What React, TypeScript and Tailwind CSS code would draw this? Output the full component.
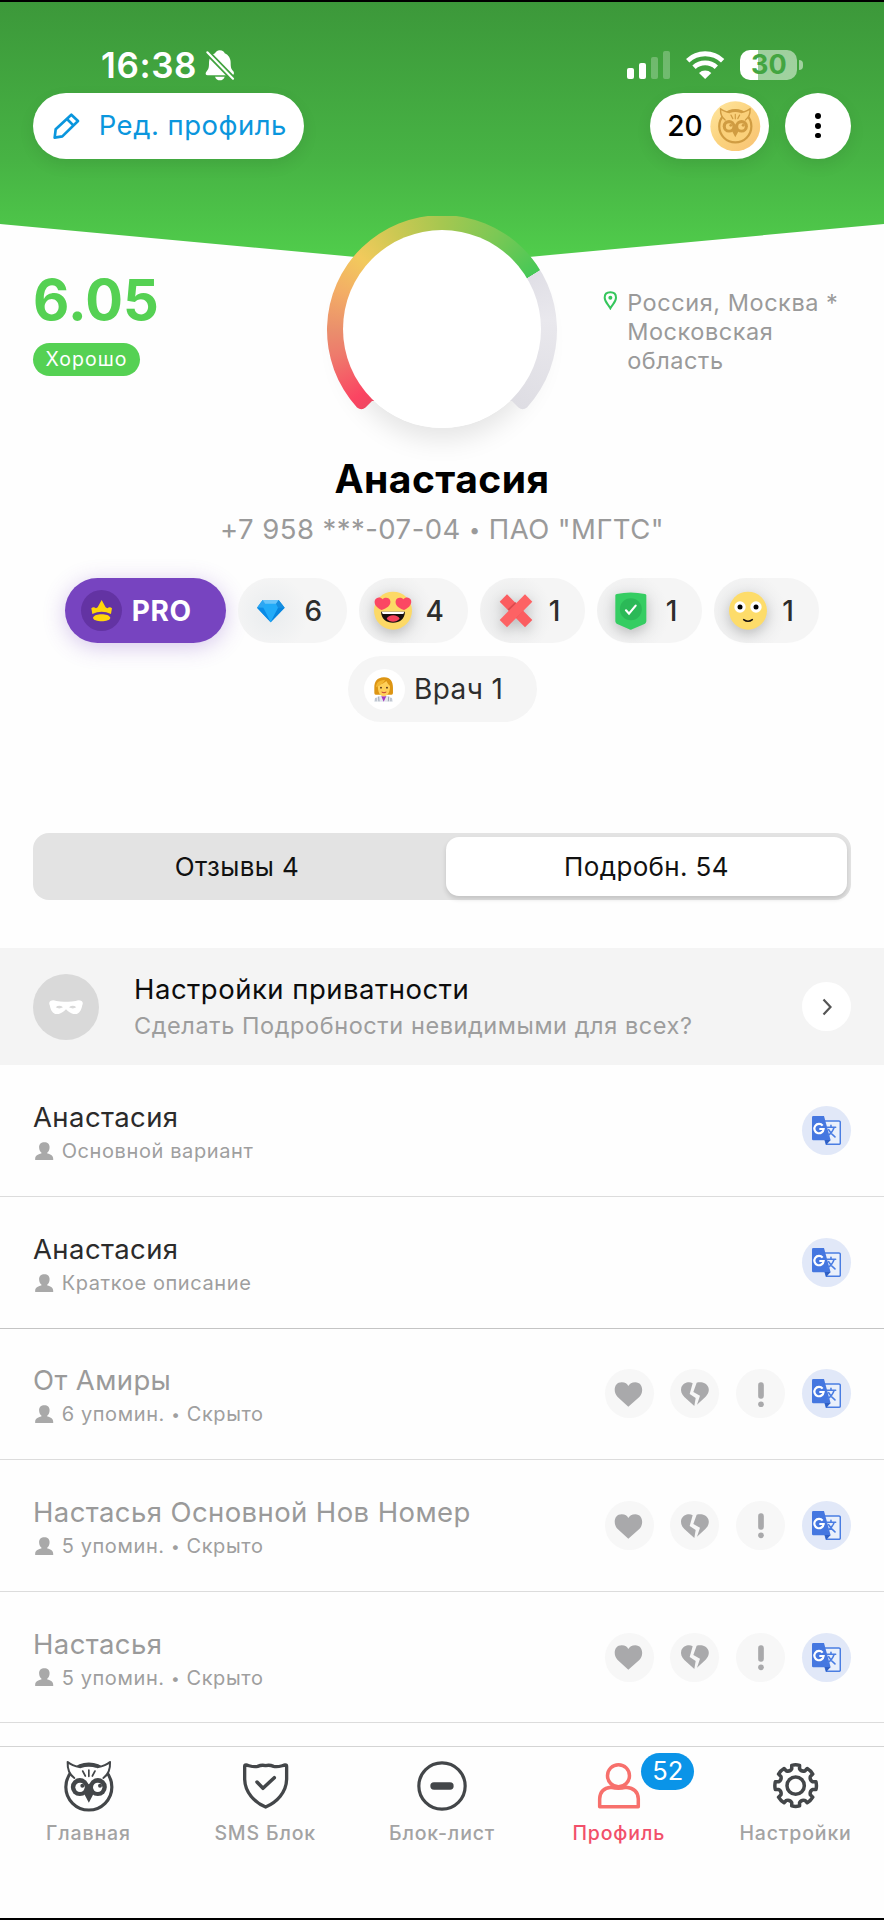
import React from 'react';

const range = (n: number) => Array.from({ length: n }, (_, i) => i);

function OwlShape({ ink, paper }: { ink: string; paper: string }) {
  return (
    <g strokeLinejoin="round" strokeLinecap="round">
      <circle cx="265.500" cy="174" r="69" fill={paper} stroke={ink} strokeWidth="9.500" />
      <path
        d="M202 99C212 108 225 112 238 115Q265 108 293 115C306 112 319 108 329 99C330 118 325 136 309 147Q282 149 265.500 165Q249 149 222 147C206 136 201 118 202 99Z"
        fill={paper}
      />
      <path d="M240 107Q265 97 291 107L289 117Q265 109 242 117Z" fill={ink} />
      <path
        d="M240 115C225 112 212 108 202 99C201 118 206 136 222 147M291 115C306 112 319 108 329 99C330 118 325 136 309 147"
        fill="none"
        stroke={ink}
        strokeWidth="6"
      />
      <path d="M247 126L255 141M265.500 123V142M284 126L276 141" stroke={ink} strokeWidth="5" />
      <circle cx="238.500" cy="174" r="27" fill={ink} />
      <circle cx="292.500" cy="174" r="27" fill={ink} />
      <path d="M240 158L265.500 166L291 158L282 190L265.500 221L249 190Z" fill={ink} />
      <circle cx="239" cy="175" r="14" fill={paper} />
      <circle cx="292" cy="175" r="14" fill={paper} />
      <circle cx="246" cy="170" r="6" fill={ink} />
      <circle cx="299" cy="170" r="6" fill={ink} />
    </g>
  );
}

function BellOff() {
  return (
    <svg viewBox="610 148 96 96" className="size-[32px]">
      <mask id="bell-cut">
        <rect x="600" y="140" width="120" height="120" fill="white" />
        <path d="M612 150L704 244" stroke="black" strokeWidth="17" />
      </mask>
      <g fill="white" mask="url(#bell-cut)">
        <path d="M657 152C666 152 671 157 672 161C684 166 690 177 690 190C690 205 692 208 698 215C702 222 699 227 694 227H621C615 227 613 221 617 216C624 208 625 203 625 190C625 176 631 166 643 161C645 157 650 152 657 152Z" />
      </g>
      <path d="M643 231H672C669 239 664 242 657.500 242C651 242 646 239 643 231Z" fill="white" />
      <path d="M620 158L697 237" stroke="white" strokeWidth="6.500" strokeLinecap="round" />
    </svg>
  );
}

function Wifi() {
  return (
    <svg viewBox="730 146 120 94" className="h-[31.300px] w-[40px]" fill="none" stroke="white" strokeWidth="14.500">
      <path d="M738 181A77 77 0 0 1 843 181" />
      <path d="M757 201A49 49 0 0 1 824 201" />
      <path d="M772 218A27 27 0 0 1 809 218L790.500 236Z" fill="white" stroke="none" />
    </svg>
  );
}

function Pencil() {
  return (
    <svg viewBox="156 332 86 86" className="size-[28.700px]" fill="none" stroke="#0a96dd" strokeWidth="8" strokeLinejoin="round">
      <path d="M164 409L167 384L214 340L234 359L187 405Z" />
      <path d="M201 353L220 372" />
    </svg>
  );
}

function Crown() {
  return (
    <svg viewBox="152 118 70 70" className="size-[23.300px]" fill="#ffd60a">
      <path d="M156 146C160 142 165 142 170 146L175 143L187 121L199 143L204 146C209 142 214 142 218 146L215 163Q187 150 159 163Z" />
      <path d="M161 174C165 160 209 160 213 174C213 188 161 188 161 174Z" />
    </svg>
  );
}

function Diamond() {
  return (
    <svg viewBox="648 114 90 78" className="h-[26px] w-[30px]">
      <path d="M668 120H716L734 143L692 187L651 143Z" fill="#129bf0" />
      <path d="M668 120L651 143H674L680 132Z" fill="#2ea6f2" />
      <path d="M668 120H716L709 132H676Z" fill="#69c4fa" />
      <path d="M676 131H709L716 143L692 187L668 143Z" fill="#22abf8" />
      <path d="M716 120L734 143H714L708 131Z" fill="#178edf" />
      <path d="M651 143H670L692 187Z" fill="#0a8be6" />
      <path d="M734 143H714L692 187Z" fill="#0785de" />
    </svg>
  );
}

function LoveFace() {
  return (
    <svg viewBox="1000 94 120 120" className="size-[40px] drop-shadow-[0_4px_6px_rgba(0,0,0,0.18)]">
      <circle cx="1060" cy="153" r="57" fill="#fcd966" />
      <path d="M1024 156H1096C1095 178 1080 189 1060 189C1040 189 1025 178 1024 156Z" fill="#17100f" />
      <path d="M1026 156H1094L1091 163H1029Z" fill="white" />
      <path d="M1041 177C1045 163 1076 163 1080 177C1070 189 1050 189 1041 177Z" fill="#f5405b" />
      <path d="M1026 151C1008 143 1002 131 1006 121C1010 112 1023 111 1029 119C1036 111 1050 114 1052 124C1054 136 1044 145 1026 151Z" fill="#fb4763" />
      <path d="M1093 151C1075 145 1066 136 1068 124C1070 114 1084 111 1091 119C1097 111 1110 112 1114 121C1117 132 1111 143 1093 151Z" fill="#fb4763" />
    </svg>
  );
}

function Cross() {
  return (
    <svg viewBox="170 98 114 114" className="size-[38px] drop-shadow-[0_4px_6px_rgba(0,0,0,0.18)]">
      <path d="M178 127L200 105L276 182L254 204Z" fill="#fb5d60" />
      <path d="M202 150L225 128L250 152L228 176Z" fill="#cf4448" opacity="0.750" />
      <path d="M178 182L254 105L276 127L200 204Z" fill="#fd6264" />
    </svg>
  );
}

function GreenShield() {
  return (
    <svg viewBox="518 92 114 120" className="h-[40px] w-[38px] drop-shadow-[0_4px_6px_rgba(0,0,0,0.18)]">
      <path d="M528 105Q528 102 532 101Q574 92 617 101Q621 102 621 105V183Q621 187 617 190L580 206Q574 210 568 206L532 190Q528 187 528 183Z" fill="#35cd62" />
      <circle cx="574.500" cy="147" r="33" fill="#2bb957" />
      <path d="M560 150L569 160L589 136" fill="none" stroke="white" strokeWidth="6.500" strokeLinecap="round" />
    </svg>
  );
}

function SmileFace() {
  return (
    <svg viewBox="864 94 120 120" className="size-[40px] drop-shadow-[0_4px_6px_rgba(0,0,0,0.18)]">
      <circle cx="924" cy="153" r="57" fill="#fddc6a" />
      <circle cx="900" cy="142" r="17" fill="white" />
      <circle cx="948" cy="142" r="17" fill="white" />
      <circle cx="900" cy="142" r="7.500" fill="black" />
      <circle cx="948" cy="142" r="7.500" fill="black" />
      <path d="M911 180Q924 190 937 180" fill="none" stroke="#17100f" strokeWidth="4.500" strokeLinecap="round" />
    </svg>
  );
}

function Doctor() {
  return (
    <svg viewBox="1000 350 70 80" className="h-[26.700px] w-[23.300px]">
      <path d="M1035 354C1055 353 1063 367 1063 385V401Q1063 408 1056 406H1014Q1007 408 1007 401V385C1007 367 1015 355 1035 354Z" fill="#dd9513" />
      <path d="M1006 427C1006 415 1014 411 1026 409H1044C1056 411 1063 415 1063 427Z" fill="#e4e8ee" />
      <path d="M1028 411H1043L1035 427Z" fill="#a43bc0" />
      <path d="M1012 426V416M1021 426L1020 412M1050 412L1049 426M1057 416V426" stroke="#8d96a8" strokeWidth="2.500" />
      <path d="M1018 377Q1035 374 1043 365Q1048 375 1054 380C1055 399 1046 411 1035 411C1025 411 1016 399 1018 377Z" fill="#ffd05a" />
      <path d="M1012 384C1012 369 1022 362 1040 361Q1034 374 1012 384Z" fill="#f2b632" />
      <circle cx="1027" cy="385" r="2.800" fill="#51301a" />
      <circle cx="1045" cy="385" r="2.800" fill="#51301a" />
      <path d="M1029 398Q1036 403 1043 398" stroke="#c23b35" strokeWidth="3" fill="none" />
    </svg>
  );
}

function Person() {
  return (
    <svg viewBox="105 184 56 57" className="size-[18.700px]" fill="#a9a9a9">
      <path d="M133 185C143 185 149 191 149 200C149 208 146 213 142 216V219C153 221 160 226 160 235V239H105V235C105 226 113 221 124 219V216C120 213 117 208 117 200C117 191 123 185 133 185Z" />
    </svg>
  );
}

function Translate() {
  return (
    <svg viewBox="0 0 88 88" className="size-[29.300px]" strokeLinecap="round" strokeLinejoin="round">
      <path d="M40 15H81Q85 15 85 19V81Q85 85 81 85H43L40 73" fill="#eaf0fb" stroke="#4a7de2" strokeWidth="4.500" />
      <path d="M4 0H36L56 73H4Q0 73 0 69V4Q0 0 4 0Z" fill="#4577e0" />
      <path d="M38 72H56L43 86Z" fill="#2f5fc4" />
      <path d="M44 34H71M57 28V34M66 35Q61 50 47 59M50 41Q55 51 69 63" fill="none" stroke="#4a7de2" strokeWidth="4.800" />
      <path d="M32 29A14 14 0 1 0 35 39H22" fill="none" stroke="white" strokeWidth="6.500" strokeLinecap="butt" strokeLinejoin="miter" />
    </svg>
  );
}

function Heart() {
  return (
    <svg viewBox="104 902 88 78" className="h-[26px] w-[29.300px]" fill="#a9a9ab">
      <path d="M147 979L115 950C100 935 104 906 127 906C138 906 144 911 147 917C151 911 157 906 168 906C190 906 195 935 180 950Z" />
    </svg>
  );
}

function BrokenHeart() {
  return (
    <svg viewBox="300 902 90 78" className="h-[26px] w-[30px]" fill="#a9a9ab">
      <path d="M338 909C327 902 309 908 304 921C301 932 305 942 313 950L343 977L347 953L329 941Z" />
      <path d="M350 907C364 903 381 908 385 921C389 933 384 942 376 950L351 973L360 946L340 935Z" />
    </svg>
  );
}

function Exclaim() {
  return (
    <svg viewBox="530 902 24 80" className="h-[26.700px] w-[8px]" fill="#a9a9ab">
      <rect x="533.500" y="906" width="17" height="49" rx="8" />
      <circle cx="542" cy="972" r="8.500" />
    </svg>
  );
}

function NavShield() {
  return (
    <svg viewBox="720 93 148 148" className="size-[49.300px]" fill="none" stroke="#434649" strokeWidth="10" strokeLinejoin="round" strokeLinecap="round">
      <path d="M735 105C746 107 758 113 770 109C780 105 787 105 794 107C801 105 808 105 818 109C830 113 842 107 853 105Q857 105 857 110V148C856 187 828 217 794 231C760 217 732 187 731 148V110Q731 105 735 105Z" />
      <path d="M768 156L786 175L820 143" strokeWidth="10.500" />
    </svg>
  );
}

function NavBlock() {
  return (
    <svg viewBox="-75 -75 150 150" className="size-[50px]" fill="none" stroke="#434649">
      <circle r="69.500" strokeWidth="9.500" />
      <path d="M-24 0H24" strokeWidth="22" strokeLinecap="round" />
    </svg>
  );
}

function NavProfile() {
  return (
    <svg viewBox="456 184 148 148" className="size-[49.300px]" fill="none" stroke="#f7706c" strokeWidth="10.500" strokeLinejoin="round">
      <circle cx="529.500" cy="228" r="33" />
      <path d="M473 321V298Q474 266 507 263Q529 268 552 263Q588 266 589 298V321Z" />
    </svg>
  );
}

function gearPath() {
  const point = (radius: number, degrees: number) => {
    const a = (degrees * Math.PI) / 180;
    return `${(radius * Math.sin(a)).toFixed(1)} ${(-radius * Math.cos(a)).toFixed(1)}`;
  };
  const teeth = range(8).map((k) => {
    const c = k * 45;
    return `${k ? 'L' : 'M'}${point(52, c - 13)}L${point(62, c - 11)}Q${point(64, c)} ${point(62, c + 11)}L${point(52, c + 13)}Q${point(45, c + 22.5)} ${point(52, c + 32)}`;
  });
  return teeth.join('') + 'Z';
}

function NavGear() {
  return (
    <svg viewBox="-74 -74 148 148" className="size-[49.300px]" fill="none" stroke="#434649" strokeWidth="10.500" strokeLinejoin="round">
      <path d={gearPath()} />
      <circle r="26" />
    </svg>
  );
}

function StatusBar() {
  return (
    <div className="flex h-[91px] items-center justify-between pt-[35px] pr-[81px] pl-[101px]">
      <div className="flex items-center gap-[7px]">
        <span className="text-[35px] leading-[40px] font-semibold tracking-[0.600px] text-white">16:38</span>
        <BellOff />
      </div>
      <div className="flex items-center">
        <div className="mr-[15px] flex h-[28px] items-end gap-[4.600px]">
          <div className="h-[11px] w-[7.400px] rounded-[2px] bg-white" />
          <div className="h-[15.700px] w-[7.400px] rounded-[2px] bg-white" />
          <div className="h-[21.700px] w-[7.400px] rounded-[2px] bg-white/25" />
          <div className="h-[27.700px] w-[7.400px] rounded-[2px] bg-white/25" />
        </div>
        <Wifi />
        <div className="ml-[15px] flex h-[30.700px] w-[57px] items-center justify-center rounded-[10px] bg-[linear-gradient(90deg,#fff_31%,rgba(255,255,255,0.5)_31%)] text-[27px] leading-[30px] font-bold text-[#43a541]">
          <span>30</span>
        </div>
        <div className="ml-[1.600px] h-[10px] w-[4px] rounded-r-full bg-white/50" />
      </div>
    </div>
  );
}

function Actions() {
  return (
    <div className="flex h-[65.700px] items-center justify-between px-[33px]">
      <button className="flex h-full w-[270.500px] items-center rounded-full bg-white pl-[19px] text-[27.500px] text-[#0a96dd] shadow-[0_6px_16px_rgba(0,0,0,0.08)]">
        <Pencil />
        <span className="ml-[18px] tracking-[0.500px] whitespace-nowrap">Ред. профиль</span>
      </button>
      <div className="flex h-full gap-[16.600px]">
        <div className="flex h-full w-[118.500px] items-center justify-between rounded-full bg-white pr-[8px] pl-[17px] text-[28px] font-medium text-black shadow-[0_6px_16px_rgba(0,0,0,0.08)]">
          <span>20</span>
          <svg viewBox="806 301 152 152" className="size-[50.600px]">
            <defs>
              <linearGradient id="coin" x1="0" y1="0" x2="1" y2="1">
                <stop offset="0" stopColor="#ffe7a2" />
                <stop offset="0.500" stopColor="#fbd27d" />
                <stop offset="1" stopColor="#f8c274" />
              </linearGradient>
            </defs>
            <circle cx="882" cy="377" r="75" fill="url(#coin)" />
            <g transform="translate(882 377) scale(0.700) translate(-265.500 -174)">
              <OwlShape ink="#d09c42" paper="#fad07a" />
            </g>
          </svg>
        </div>
        <button className="flex size-[65.700px] flex-col items-center justify-center gap-[4px] rounded-full bg-white shadow-[0_6px_16px_rgba(0,0,0,0.08)]">
          {range(3).map((i) => (
            <span key={i} className="size-[5.700px] rounded-full bg-black" />
          ))}
        </button>
      </div>
    </div>
  );
}

function ScoreRing() {
  return (
    <div className="grid size-[230px]">
      <div className="mt-[14.300px] size-[197.400px] justify-self-center rounded-full shadow-[0_12px_26px_rgba(0,0,0,0.10)] [grid-area:1/1]" />
      <div className="size-[230px] bg-[conic-gradient(from_219deg,#e04a5e_0deg,#ee4760_5deg,#fb4462_13deg,#ee7a6c_38deg,#ea8e6c_51deg,#f3ad66_72deg,#f2ca5c_93deg,#cdc853_115deg,#a6c750_141deg,#7cc855_170deg,#46c856_199deg,#e0dfe6_199.300deg,#e9e8ed_225deg,#dedde3_276deg,#e5e4e9_290deg)] [grid-area:1/1] [clip-path:path('M45_185L38.500_191.500Q34.500_195_30_191.500A115_115_0_1_1_200_191.500Q195.500_195_191.500_191.500L185_185Z')]" />
      <div className="relative z-10 mt-[14.300px] size-[197.400px] justify-self-center rounded-full bg-white [grid-area:1/1]" />
    </div>
  );
}

function Hero() {
  return (
    <section className="grid">
      <div className="h-[263px] bg-[linear-gradient(180deg,#3c983a,#47b344_60%,#51cf4c)] [clip-path:polygon(0_0,100%_0,100%_222px,50%_263px,0_222px)] [grid-area:1/1]" />
      <div className="z-10 [grid-area:1/1]">
        <StatusBar />
        <Actions />
        <div className="grid h-[296.300px] grid-cols-[294px_230px_1fr] pl-[33px]">
          <div className="flex flex-col items-start pt-[111.500px]">
            <span className="text-[56px] leading-[60px] font-bold tracking-[0.200px] text-[#55d153]">6.05</span>
            <span className="mt-[13px] flex h-[32.500px] w-[107px] items-center justify-center rounded-full bg-[#55d153] pt-[1px] text-[19.500px] tracking-[1px] text-white">
              Хорошо
            </span>
          </div>
          <div className="pt-[57.300px]">
            <ScoreRing />
          </div>
          <div className="flex pt-[129px] pl-[46px] text-[23.500px] leading-[29px] tracking-[0.550px] text-[#9a9a9a]">
            <svg viewBox="484 270 44 60" className="mt-[2.500px] h-[20px] w-[14.700px]" fill="none" stroke="#35c65c" strokeWidth="6">
              <path d="M506 325C499 312 489 305 489 293C489 283 496 277 506 277C516 277 523 283 523 293C523 305 513 312 506 325Z" />
              <circle cx="506" cy="293" r="6" fill="#35c65c" stroke="none" />
            </svg>
            <p className="ml-[9.500px] whitespace-nowrap">
              Россия, Москва *<br />
              Московская
              <br />
              область
            </p>
          </div>
        </div>
        <h1 className="h-[48px] text-center text-[39px] leading-[47px] font-bold tracking-[0.500px] text-black">Анастасия</h1>
        <p className="mt-[8px] h-[37px] text-center text-[27.500px] leading-[36px] tracking-[0.450px] text-[#9a9a9a]">
          +7 958 ***-07-04 <span className="align-[2px] text-[20px] leading-none">•</span> ПАО "МГТС"
        </p>
      </div>
    </section>
  );
}

function Badges() {
  const chip = 'flex h-[65.500px] items-center rounded-full bg-[#f5f5f5] text-[28px] text-[#2d2d2d]';
  return (
    <section className="mt-[30px] flex flex-col items-center gap-[13px]">
      <div className="flex gap-[12px]">
        <div className="flex h-[65.500px] w-[161px] items-center rounded-full bg-[#7744c0] pl-[16.500px] shadow-[0_4px_22px_rgba(119,68,192,0.30)]">
          <span className="flex size-[41px] items-center justify-center rounded-full bg-[#6333a3]">
            <Crown />
          </span>
          <span className="ml-[9.500px] text-[28px] font-bold tracking-[0.600px] text-white">PRO</span>
        </div>
        <div className={`${chip} w-[109px] justify-between bg-[radial-gradient(circle_at_30%_55%,#e9ecee,#f5f5f5_45%)] pr-[24.500px] pl-[18px] font-medium`}>
          <Diamond />
          <span>6</span>
        </div>
        <div className={`${chip} w-[109.500px] justify-between bg-[radial-gradient(circle_at_30%_55%,#e4e5e6,#f5f5f5_50%)] pr-[24.500px] pl-[14px] font-medium`}>
          <LoveFace />
          <span>4</span>
        </div>
        <div className={`${chip} w-[105px] justify-between bg-[radial-gradient(circle_at_30%_55%,#e4e5e6,#f5f5f5_50%)] pr-[25px] pl-[16.500px] font-medium`}>
          <Cross />
          <span>1</span>
        </div>
        <div className={`${chip} w-[105px] justify-between bg-[radial-gradient(circle_at_30%_55%,#e4e5e6,#f5f5f5_50%)] pr-[25px] pl-[15px] font-medium`}>
          <GreenShield />
          <span>1</span>
        </div>
        <div className={`${chip} w-[105px] justify-between bg-[radial-gradient(circle_at_30%_55%,#e4e5e6,#f5f5f5_50%)] pr-[25.500px] pl-[14px] font-medium`}>
          <SmileFace />
          <span>1</span>
        </div>
      </div>
      <div className={`${chip} w-[189px] pl-[16px]`}>
        <span className="flex size-[41px] items-center justify-center rounded-full bg-white">
          <Doctor />
        </span>
        <span className="ml-[9.500px] tracking-[0.400px]">Врач 1</span>
      </div>
    </section>
  );
}

function Tabs() {
  return (
    <div className="mx-[33px] mt-[111.500px] flex h-[67px] rounded-[16px] bg-[#e3e3e3] p-[4px] text-[26px] tracking-[0.350px] text-[#111]">
      <div className="flex flex-1 items-center justify-center pr-[9px] pb-[1px]">Отзывы 4</div>
      <div className="flex w-[401px] items-center justify-center rounded-[13px] bg-white pb-[1px] shadow-[0_3px_5px_rgba(0,0,0,0.14)]">
        Подробн. 54
      </div>
    </div>
  );
}

function Privacy() {
  return (
    <div className="mt-[48px] flex h-[117px] items-center bg-[#f4f4f4] px-[33px]">
      <span className="flex size-[66px] items-center justify-center rounded-full bg-[#d9d9d9]">
        <svg viewBox="0 0 102 44" className="h-[14.600px] w-[34px]">
          <path
            fillRule="evenodd"
            fill="white"
            d="M4 3Q12 -2 22 3Q38 6 51 5Q64 6 80 3Q90 -2 98 3Q104 8 100 16C98 28 94 38 84 42C74 45 62 40 51 28C40 40 28 45 18 42C8 38 4 28 2 16Q-2 8 4 3ZM20 22Q30 13 42 22Q30 29 20 22ZM60 22Q72 13 82 22Q72 29 60 22Z"
          />
        </svg>
      </span>
      <div className="ml-[35px] flex-1 pt-[1px]">
        <p className="text-[27.500px] leading-[36px] tracking-[0.500px] text-[#0c0c0c]">Настройки приватности</p>
        <p className="text-[23.500px] leading-[37px] tracking-[0.580px] whitespace-nowrap text-[#9d9d9d]">
          Сделать Подробности невидимыми для всех?
        </p>
      </div>
      <span className="flex size-[49px] items-center justify-center rounded-full bg-white">
        <svg viewBox="0 0 10 18" className="h-[18px] w-[10px]" fill="none" stroke="#555" strokeWidth="2.200">
          <path d="M1.500 1.500L8.500 9L1.500 16.500" />
        </svg>
      </span>
    </div>
  );
}

const entries = [
  { name: 'Анастасия', note: 'Основной вариант', own: true },
  { name: 'Анастасия', note: 'Краткое описание', own: true },
  { name: 'От Амиры', note: '6 упомин.', own: false },
  { name: 'Настасья Основной Нов Номер', note: '5 упомин.', own: false },
  { name: 'Настасья', note: '5 упомин.', own: false },
];

function Names() {
  const button = 'flex size-[49px] items-center justify-center rounded-full';
  return (
    <ul className="flex-1 overflow-hidden">
      {entries.map((entry, i) => (
        <li
          key={i}
          className={`flex h-[131.600px] items-center justify-between border-b px-[33px] ${i === 1 ? 'border-[#c4c4c4]' : 'border-[#dcdcdc]'}`}
        >
          <div className="pt-[5px]">
            <p className={`text-[27.500px] leading-[36px] tracking-[0.400px] ${entry.own ? 'text-[#2b2b2b]' : 'text-[#9a9a9a]'}`}>{entry.name}</p>
            <p className="flex items-center pl-[2px] text-[20px] leading-[32px] tracking-[0.600px] text-[#9f9f9f]">
              <Person />
              <span className="ml-[8px]">
                {entry.note}
                {!entry.own && (
                  <>
                    {' '}
                    <span className="align-[1px] text-[15.500px] leading-none">•</span> Скрыто
                  </>
                )}
              </span>
            </p>
          </div>
          <div className="flex gap-[16.800px]">
            {!entry.own && (
              <>
                <span className={`${button} bg-[#f7f7f7]`}>
                  <Heart />
                </span>
                <span className={`${button} bg-[#f7f7f7]`}>
                  <BrokenHeart />
                </span>
                <span className={`${button} bg-[#f7f7f7]`}>
                  <Exclaim />
                </span>
              </>
            )}
            <span className={`${button} bg-[#e1e8f8]`}>
              <Translate />
            </span>
          </div>
        </li>
      ))}
    </ul>
  );
}

function NavItem({ label, active, children }: { label: string; active?: boolean; children: React.ReactNode }) {
  return (
    <div className="relative flex flex-1 flex-col items-center pt-[12px]">
      <div className="flex h-[54px] items-center justify-center">{children}</div>
      <span className={`mt-[5px] text-[19.500px] leading-[30px] font-medium tracking-[0.850px] ${active ? 'text-[#f2506a]' : 'text-[#a3a3a3]'}`}>
        {label}
      </span>
    </div>
  );
}

function BottomNav() {
  return (
    <nav className="flex h-[172px] border-t border-[#d4d4d4] bg-[#fefefe]">
      <NavItem label="Главная">
        <svg viewBox="188 93 155 158" className="h-[52.700px] w-[51.700px]">
          <OwlShape ink="#434649" paper="#ffffff" />
        </svg>
      </NavItem>
      <NavItem label="SMS Блок">
        <NavShield />
      </NavItem>
      <NavItem label="Блок-лист">
        <NavBlock />
      </NavItem>
      <NavItem label="Профиль" active>
        <NavProfile />
        <span className="absolute top-[6px] left-[111px] flex h-[37px] w-[53px] items-center justify-center rounded-full bg-[#0a94e8] text-[25.500px] text-white">
          52
        </span>
      </NavItem>
      <NavItem label="Настройки">
        <NavGear />
      </NavItem>
    </nav>
  );
}

export default function App() {
  return (
    <main className="flex h-[1920px] w-[884px] flex-col overflow-hidden border-y-2 border-black bg-[#fefefe] font-['Inter',sans-serif]">
      <Hero />
      <Badges />
      <Tabs />
      <Privacy />
      <Names />
      <BottomNav />
    </main>
  );
}
